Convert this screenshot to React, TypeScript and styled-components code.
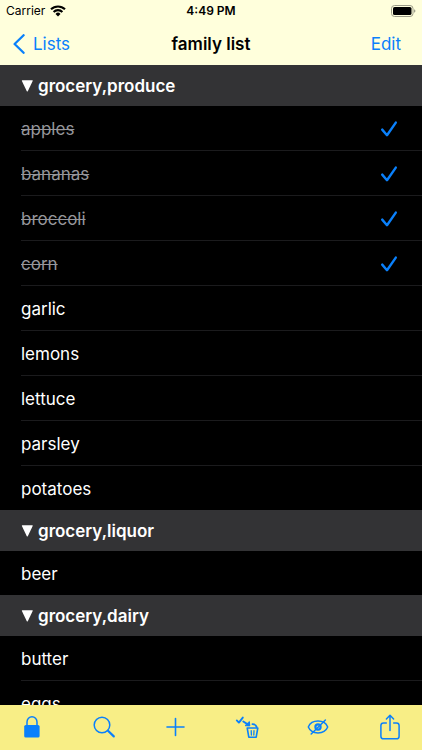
import React, { useState } from "react";
import styled, { createGlobalStyle } from "styled-components";

const BLUE = "#0a80fb";

const GlobalStyle = createGlobalStyle`
  * { box-sizing: border-box; }
  body {
    margin: 0;
    background: #000;
    font-family: Inter, "Liberation Sans", sans-serif;
    font-size: 17px;
  }
  button {
    margin: 0;
    padding: 0;
    border: 0;
    background: none;
    font: inherit;
    color: inherit;
    cursor: pointer;
  }
  svg { display: block; flex: none; }
`;

const Screen = styled.div`
  display: flex;
  flex-direction: column;
  height: 100vh;
  overflow: hidden;
`;

const Header = styled.header`
  flex: none;
  background: #ffffdc;
  color: #000;
`;

const StatusBar = styled.div`
  display: grid;
  grid-template-columns: 1fr auto 1fr;
  align-items: center;
  height: 22px;
  padding: 0 6px;
  font-size: 12px;
  line-height: 22px;
`;

const Carrier = styled.div`
  display: flex;
  align-items: center;
  gap: 5px;
`;

const Clock = styled.time`
  font-weight: 600;
`;

const BatterySlot = styled.div`
  justify-self: end;
`;

const NavBar = styled.nav`
  display: grid;
  grid-template-columns: 1fr auto 1fr;
  align-items: center;
  height: 43px;
  padding: 0 13px;
`;

const NavLink = styled.a`
  display: flex;
  align-items: center;
  gap: 8px;
  justify-self: start;
  color: ${BLUE};
  text-decoration: none;
`;

const NavButton = styled.button`
  && {
    justify-self: end;
    padding: 0 8px;
    color: ${BLUE};
  }
`;

const Title = styled.h1`
  margin: 0;
  font-size: 17px;
  font-weight: 600;
`;

const Lists = styled.main`
  flex: 1;
  min-height: 0;
  overflow-y: auto;
  scrollbar-width: none;
  background: #000;
  color: #fff;
`;

const SectionHeading = styled.h2`
  margin: 0;
  background: #333335;
  font-size: 17px;
  font-weight: 600;
`;

const SectionToggle = styled.button<{ $open: boolean }>`
  display: flex;
  align-items: center;
  gap: 5px;
  width: 100%;
  height: 41px;
  && { padding: 1px 21px 0; }
  svg { transform: ${(p) => (p.$open ? "none" : "rotate(-90deg)")}; }
`;

const Items = styled.ul`
  margin: 0;
  padding: 0;
  list-style: none;
`;

const Item = styled.li`
  padding-left: 21px;

  &:not(:last-child) > label {
    height: 45px;
    border-bottom: 1px solid #1b1b1d;
  }
`;

const ItemLabel = styled.label<{ $done: boolean }>`
  display: flex;
  align-items: center;
  justify-content: space-between;
  height: 44px;
  padding: 1px 24px 0 0;
  color: ${(p) => (p.$done ? "#96969b" : "#fff")};
  text-decoration: ${(p) => (p.$done ? "line-through" : "none")};
  text-decoration-thickness: 1px;
  cursor: pointer;
`;

const TickBox = styled.input`
  appearance: none;
  width: 18px;
  height: 18px;
  margin: 0;
  cursor: pointer;
`;

const Tick = styled.span`
  display: grid;
  > * { grid-area: 1 / 1; }
`;

const Toolbar = styled.footer`
  flex: none;
  display: flex;
  justify-content: space-between;
  height: 45px;
  padding: 0 10px;
  background: #f8ee86;
`;

const ToolButton = styled.button`
  display: grid;
  place-items: center;
  width: 44px;
  height: 44px;
  && { color: ${BLUE}; }
`;

const stroke = {
  fill: "none",
  stroke: "currentColor",
  strokeLinecap: "round" as const,
  strokeLinejoin: "round" as const,
};

const WifiIcon = () => (
  <svg width="16" height="12" viewBox="0 0 16 12" aria-label="Wi-Fi">
    <g fill="none" stroke="#000" strokeWidth="2.1">
      <path d="M1 4.3a10 10 0 0 1 14 0" />
      <path d="M3.6 7a6.2 6.2 0 0 1 8.8 0" />
    </g>
    <path d="M8 11.4 5.5 8.9a3.5 3.5 0 0 1 5 0Z" />
  </svg>
);

const BatteryIcon = () => (
  <svg width="25" height="12" viewBox="0 0 25 12" aria-label="Battery full">
    <rect x="0.5" y="0.5" width="21.5" height="11" rx="3" fill="none" stroke="#9c9c88" />
    <rect x="2" y="2" width="18.5" height="8" rx="1.6" />
    <path d="M23.2 4.2c1.6.6 1.6 3 0 3.6Z" fill="#8b8b7a" />
  </svg>
);

const BackIcon = () => (
  <svg width="12" height="20" viewBox="0 0 12 20" {...stroke} strokeWidth="2.3">
    <path d="M10.6 1.2 1.6 10l9 8.8" />
  </svg>
);

const TriangleIcon = () => (
  <svg width="12" height="12" viewBox="0 0 12 12" fill="currentColor">
    <path d="M1.3.3h10q.7 0 .4.7L6.9 11q-.6 1-1.2 0L.9 1Q.6.3 1.3.3Z" />
  </svg>
);

const CheckIcon = () => (
  <svg width="18" height="18" viewBox="0 0 18 18" {...stroke} stroke={BLUE} strokeWidth="2.4">
    <path d="M2.2 9.6 7 15.2 15.8 2.6" />
  </svg>
);

const LockIcon = () => (
  <svg width="18" height="24" viewBox="0 0 18 24">
    <path d="M4 11V7a5 5.3 0 0 1 10 0v4" {...stroke} strokeWidth="1.5" />
    <rect x="1.2" y="10" width="15.4" height="12.6" rx="1.6" fill="currentColor" />
  </svg>
);

const SearchIcon = () => (
  <svg width="24" height="24" viewBox="0 0 24 24" {...stroke} strokeWidth="1.5">
    <circle cx="10" cy="10" r="7.8" />
    <path d="m16 15.8 5.8 5.6" strokeWidth="2.2" />
  </svg>
);

const PlusIcon = () => (
  <svg width="20" height="20" viewBox="0 0 20 20" {...stroke} strokeWidth="1.6">
    <path d="M10.500 1.500v17M2 10h17" />
  </svg>
);

const ClearDoneIcon = () => (
  <svg width="24" height="24" viewBox="0 0 24 24" {...stroke} strokeWidth="1.6">
    <path d="m1.8 5.4 2.1 2.2 3.9-5" strokeWidth="1.9" />
    <path d="m8.300 6.500 5.600 3.600" strokeWidth="1.900" />
    <path d="m14.400 6.900.4 4-4.400-.2Z" fill="currentColor" strokeWidth="1" />
    <path d="M12.200 13h10.600l-1.600 9.200h-7.400Z" />
    <path d="M16.200 15.600l.2 4.400M19 15.600l-.2 4.400" strokeWidth="1.300" />
    <path d="M17.400 9.200q3.600.2 4.300 2.800" strokeWidth="1.800" />
  </svg>
);

const HideIcon = () => (
  <svg width="22" height="18" viewBox="0 0 22 18" {...stroke} strokeWidth="1.5">
    <path d="M1.300 9C3 5 7 3.100 11 3.100S19 5 20.700 9C19 13 15 14.900 11 14.900S3 13 1.300 9Z" />
    <circle cx="11" cy="9" r="2.600" strokeWidth="2.200" />
    <path d="M18.400 2 4.200 16" />
  </svg>
);

const ShareIcon = () => (
  <svg width="22" height="28" viewBox="0 0 22 28" {...stroke} strokeWidth="1.5">
    <path d="M7.300 10H4.500a2.600 2.600 0 0 0-2.600 2.600v10.600a2.600 2.600 0 0 0 2.600 2.600h13a2.600 2.600 0 0 0 2.600-2.600V12.600a2.600 2.600 0 0 0-2.600-2.600h-2.800" />
    <path d="M11 17.500V2.500M7.400 6 11 2.300 14.600 6" />
  </svg>
);

const sections = [
  {
    name: "grocery,produce",
    items: ["apples", "bananas", "broccoli", "corn", "garlic", "lemons", "lettuce", "parsley", "potatoes"],
  },
  { name: "grocery,liquor", items: ["beer"] },
  { name: "grocery,dairy", items: ["butter", "eggs"] },
];

const tools = [
  { label: "Lock", Icon: LockIcon },
  { label: "Search", Icon: SearchIcon },
  { label: "Add item", Icon: PlusIcon },
  { label: "Clear checked items", Icon: ClearDoneIcon },
  { label: "Hide checked items", Icon: HideIcon },
  { label: "Share", Icon: ShareIcon },
];

function Section({ name, items }: { name: string; items: string[] }) {
  const [open, setOpen] = useState(true);
  const [done, setDone] = useState<string[]>(["apples", "bananas", "broccoli", "corn"]);
  const toggle = (item: string) =>
    setDone((d) => (d.includes(item) ? d.filter((x) => x !== item) : [...d, item]));

  return (
    <section>
      <SectionHeading>
        <SectionToggle type="button" $open={open} aria-expanded={open} onClick={() => setOpen(!open)}>
          <TriangleIcon />
          {name}
        </SectionToggle>
      </SectionHeading>
      {open && (
        <Items>
          {items.map((item) => (
            <Item key={item}>
              <ItemLabel $done={done.includes(item)}>
                {item}
                <Tick>
                  <TickBox type="checkbox" checked={done.includes(item)} onChange={() => toggle(item)} />
                  {done.includes(item) && <CheckIcon />}
                </Tick>
              </ItemLabel>
            </Item>
          ))}
        </Items>
      )}
    </section>
  );
}

export default function App() {
  return (
    <Screen>
      <GlobalStyle />
      <Header>
        <StatusBar>
          <Carrier>
            Carrier
            <WifiIcon />
          </Carrier>
          <Clock>4:49 PM</Clock>
          <BatterySlot>
            <BatteryIcon />
          </BatterySlot>
        </StatusBar>
        <NavBar>
          <NavLink href="#lists">
            <BackIcon />
            Lists
          </NavLink>
          <Title>family list</Title>
          <NavButton type="button">Edit</NavButton>
        </NavBar>
      </Header>
      <Lists>
        {sections.map((s) => (
          <Section key={s.name} {...s} />
        ))}
      </Lists>
      <Toolbar>
        {tools.map(({ label, Icon }) => (
          <ToolButton key={label} type="button" aria-label={label}>
            <Icon />
          </ToolButton>
        ))}
      </Toolbar>
    </Screen>
  );
}
